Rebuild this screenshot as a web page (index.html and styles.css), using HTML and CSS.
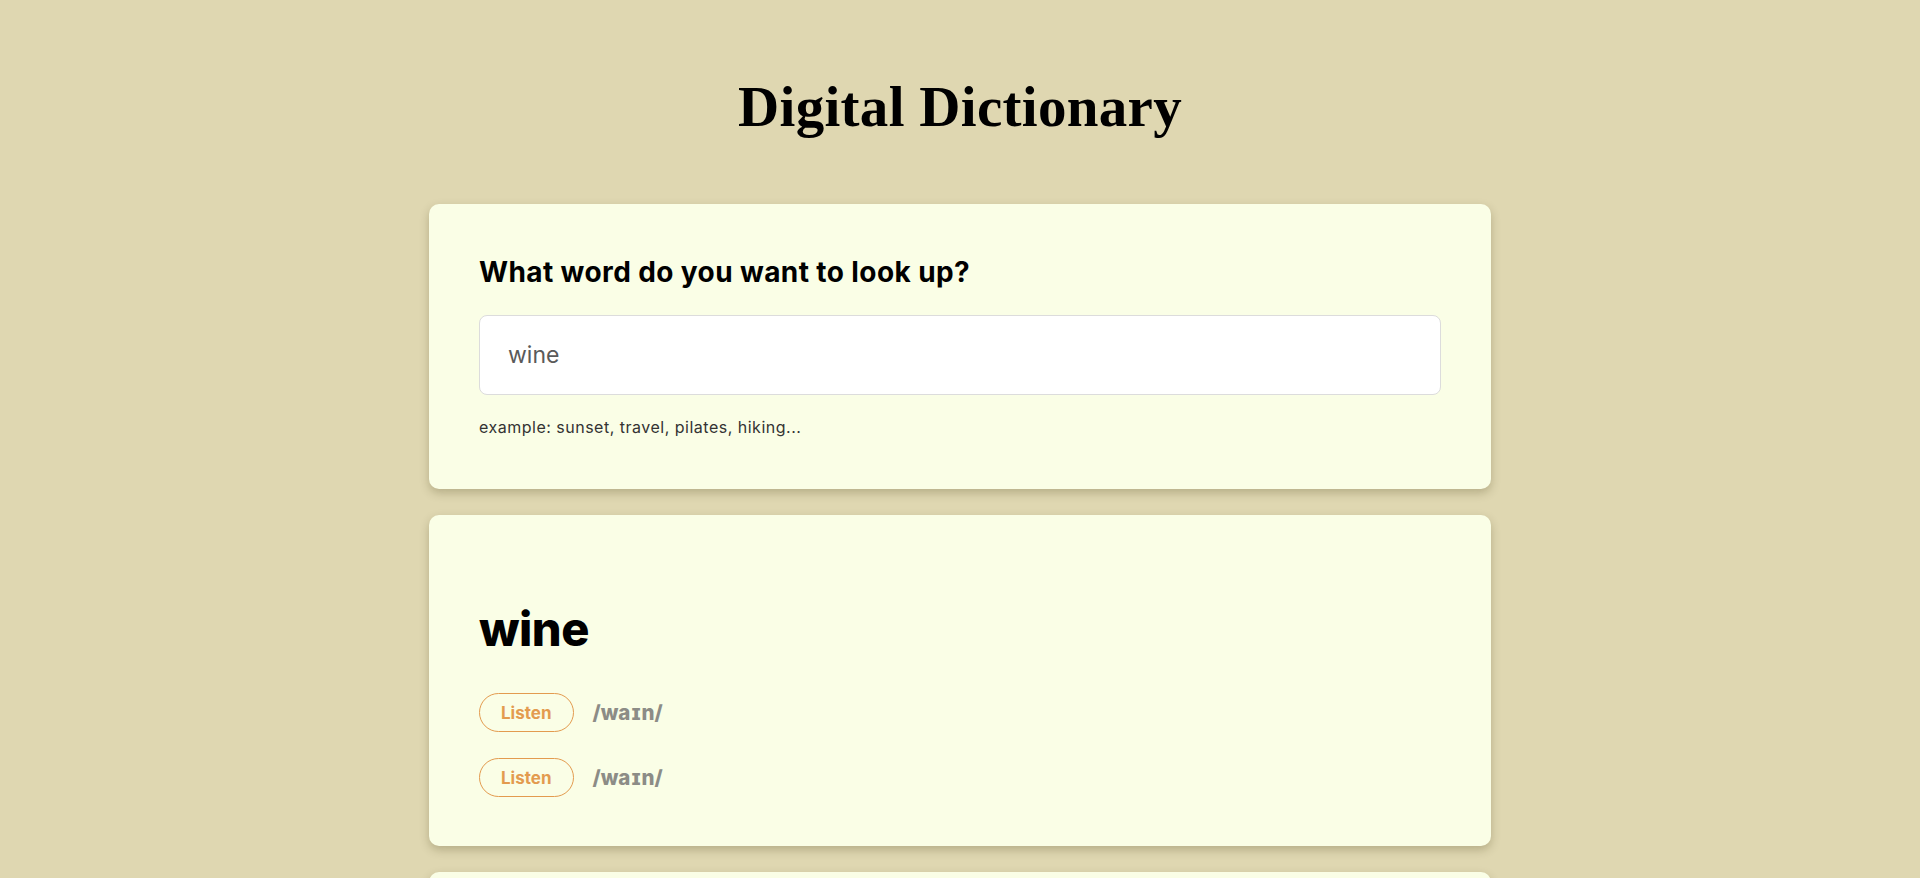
FILE: index.html
```html
<!DOCTYPE html>
<html lang="en">
<head>
<meta charset="utf-8">
<title>Digital Dictionary</title>
<link rel="stylesheet" href="styles.css">
</head>
<body>
  <header class="header">
    <h1 class="title">Digital Dictionary</h1>
  </header>
  <main class="main">
    <section class="card search-card">
      <h2 class="search-label">What word do you want to look up?</h2>
      <form class="search-form">
        <input class="search-input" type="search" value="wine" aria-label="Search word">
      </form>
      <p class="hint">example: sunset, travel, pilates, hiking...</p>
    </section>
    <section class="card result-card">
      <h2 class="word">wine</h2>
      <div class="phonetics">
        <div class="phonetic-row">
          <button class="listen" type="button">Listen</button>
          <span class="phonetic-text">/waɪn/</span>
        </div>
        <div class="phonetic-row">
          <button class="listen" type="button">Listen</button>
          <span class="phonetic-text">/waɪn/</span>
        </div>
      </div>
    </section>
    <section class="card meaning-card"></section>
  </main>
</body>
</html>
```
FILE: styles.css
```css
html, body {
  margin: 0;
  padding: 0;
}

body {
  background: #dfd7b1;
  font-family: "Inter", "Open Sans", "DejaVu Sans", sans-serif;
  color: #000;
  min-height: 100vh;
}

.header {
  padding-top: 74px;
  display: flex;
  justify-content: center;
}

.title {
  margin: 0;
  font-family: "Liberation Serif", "Times New Roman", serif;
  font-weight: 700;
  font-size: 57px;
  line-height: 66px;
  letter-spacing: 0.3px;
  color: #000;
}

.main {
  width: 1062px;
  margin: 64px auto 0;
  display: flex;
  flex-direction: column;
  gap: 26px;
}

.card {
  background: #fafee6;
  border-radius: 10px;
  box-shadow: 0 4px 10px rgba(60, 50, 10, 0.25);
  padding: 51px 50px;
}

.search-label {
  margin: 0;
  font-size: 28px;
  line-height: 34px;
  font-weight: 700;
  letter-spacing: 0.4px;
}

.search-form {
  margin: 26px 0 0;
}

.search-input {
  display: block;
  width: 100%;
  height: 80px;
  box-sizing: border-box;
  border: 1px solid #dcdcdc;
  border-radius: 8px;
  background: #fff;
  padding: 0 28px;
  font-family: inherit;
  font-size: 23px;
  color: #5a5a5a;
  outline: none;
  -webkit-appearance: none;
  appearance: none;
}

.hint {
  margin: 21px 0 0;
  font-size: 16px;
  line-height: 22px;
  letter-spacing: 0.5px;
  color: #333;
}

.result-card {
  padding-top: 86px;
  padding-bottom: 49px;
}

.word {
  margin: 0;
  font-size: 47px;
  line-height: 56px;
  font-weight: 800;
  letter-spacing: -0.5px;
}

.phonetics {
  margin-top: 36px;
  display: flex;
  flex-direction: column;
  gap: 26px;
}

.phonetic-row {
  display: flex;
  align-items: center;
  gap: 19px;
}

.listen {
  height: 39px;
  box-sizing: border-box;
  padding: 0 21px;
  border: 1px solid #e39b4f;
  border-radius: 20px;
  background: transparent;
  color: #e39b4f;
  font-family: inherit;
  font-size: 17px;
  font-weight: 700;
  cursor: pointer;
}

.phonetic-text {
  font-size: 20.5px;
  font-weight: 800;
  color: #8c8c86;
}

.meaning-card {
  min-height: 200px;
}
```
